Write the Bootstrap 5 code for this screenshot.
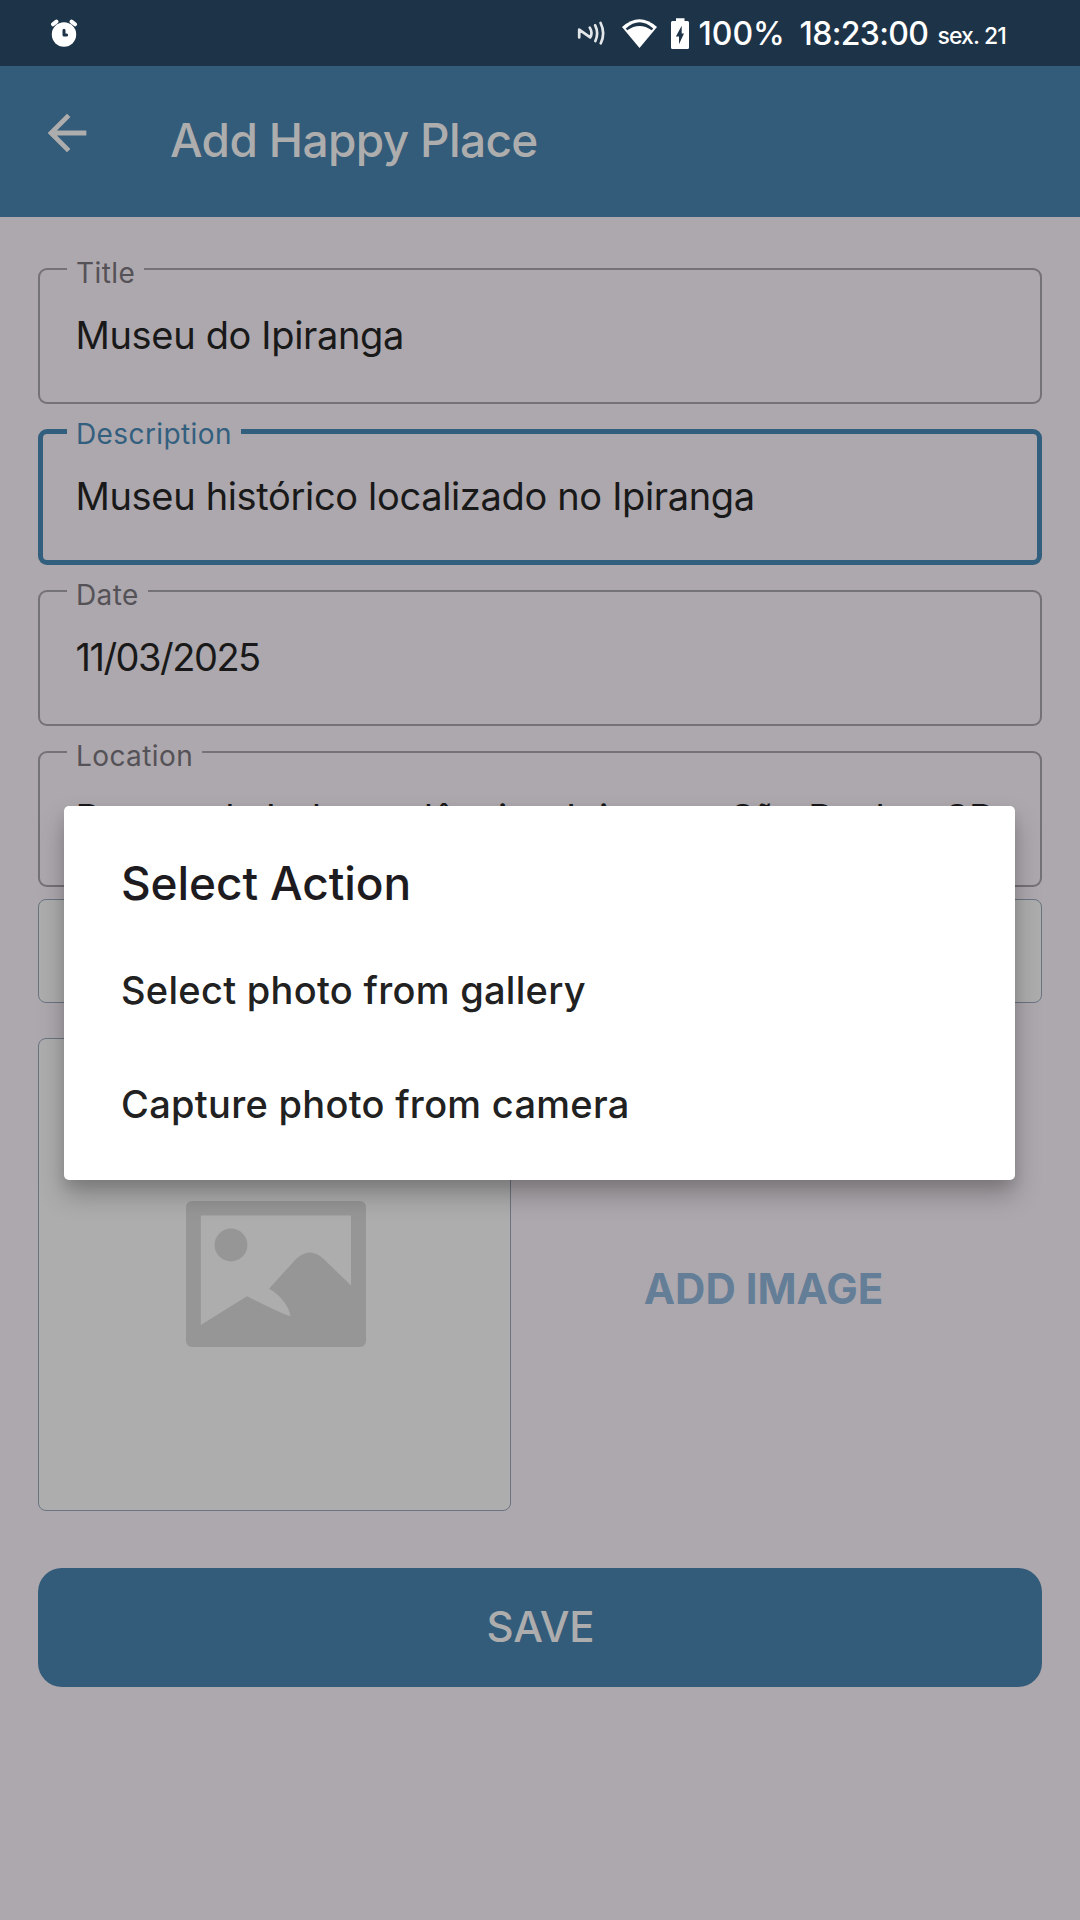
<!DOCTYPE html>
<html lang="pt-BR">
<head>
<meta charset="utf-8">
<meta name="viewport" content="width=device-width, initial-scale=1">
<title>Add Happy Place</title>
<link href="https://cdn.jsdelivr.net/npm/bootstrap@5.3.0/dist/css/bootstrap.min.css" rel="stylesheet">
<style>
  body { font-family: Inter, Roboto, sans-serif; background: #ada8ad; color: #191919; height: 1920px; overflow: hidden; }
  .status-bar { height: 66px; background: #1d3347; padding: 0 74px 0 51px; }
  .status-bar svg { display: block; }
  .st-text { font-size: 32px; line-height: 34px; font-weight: 500; white-space: nowrap; margin-left: -1px; padding-top: 1px; }
  .st-pct { width: 102px; }
  .st-time { width: 138px; letter-spacing: -.64px; }
  .st-day { font-size: 23px; letter-spacing: -.9px; line-height: 34px; font-weight: 500; padding-top: 6px; }
  .ic-wifi { margin-left: 16px; }
  .ic-battery { margin: 0 10px 0 14px; }
  .app-bar { height: 151px; background: #335b7a; color: #adadad; padding: 38px 38px 0; }
  .app-title { font-size: 46px; line-height: 56px; font-weight: 500; letter-spacing: -.64px; margin: 8px 0 0 74px; }
  .form-area { padding: 51px 38px 0; }
  .outlined { height: 136px; margin-bottom: 25px; padding: 0 36px 2px 37.5px; border-radius: 9px; box-shadow: inset 0 0 0 2px #747177; font-size: 38px; letter-spacing: -.34px; white-space: nowrap; }
  .outlined.active { box-shadow: inset 0 0 0 5px #335f7f; }
  .outlined.date-field { letter-spacing: -1.5px; }
  .outlined.place-field { letter-spacing: -.29px; }
  .float-label { top: -9.5px; left: 29px; padding: 0 9px 0 9px; background: #ada8ad; color: #555257; font-size: 28px; line-height: 28px; letter-spacing: .4px; }
  .active .float-label { color: #335f7f; }
  .plain-box { background: #adadad; border: 1px solid #697583; border-radius: 8px; }
  .map-box { height: 104px; margin-top: -13px; }
  .photo-row { margin-top: 35px; }
  .photo-box { width: 473px; height: 473px; }
  .photo-box svg { margin-left: 3px; margin-top: -1px; }
  .add-link { font-size: 42px; font-weight: 700; line-height: 50px; color: #647e98; padding: 29px 26px 0 0; }
  .btn-save { height: 119px; margin-top: 57px; padding: 0 0 2px 1px; border-radius: 24px; background: #335b7a; color: #adadad; font-size: 42px; font-weight: 500; letter-spacing: -.26px; }
  .dialog-card { left: 64px; top: 806px; width: 951px; height: 374px; border-radius: 5px; background: #fff; padding: 48.5px 57px 0; box-shadow: 0 15px 26px rgba(0,0,0,.25), 0 6px 12px rgba(0,0,0,.08); }
  .dialog-title { font-size: 46px; line-height: 56px; font-weight: 500; letter-spacing: -.1px; color: #1d1b20; }
  .dialog-item { font-size: 38px; line-height: 113.5px; font-weight: 500; letter-spacing: .29px; color: #212121; }
  .dialog-title + .dialog-item { margin-top: 23.5px; }
</style>
</head>
<body>
<div class="status-bar d-flex align-items-center text-white">
  <svg width="27" height="28" viewBox="51 19 27 28">
    <circle cx="64" cy="34.5" r="12.2" fill="#fff"/>
    <path d="M53 24.3L56.4 21.6M75 24.3L71.6 21.6" stroke="#fff" stroke-width="4" stroke-linecap="round"/>
    <path d="M64 30.2V34.9H66.6" fill="none" stroke="#1d3347" stroke-width="3" stroke-linecap="round" stroke-linejoin="round"/>
  </svg>
  <svg class="ms-auto" width="30" height="26" viewBox="576 20 30 26" fill="none" stroke="#e3e7ea" stroke-width="2.7" stroke-linecap="round" stroke-linejoin="round">
    <path d="M579.2 37.500V29.600L590.200 37.400Q593 33 589.800 27.600M595.200 25.300Q599 33 595.400 41M600.600 23Q605.600 33 600.800 43.300"/>
  </svg>
  <svg class="ic-wifi" width="35" height="29" viewBox="622 18 35 29">
    <path d="M622 26Q639.5 10.4 657 26L639.5 47Z" fill="#fff"/>
    <path d="M625.8 27.4Q639.5 15 653.2 27.4L651.8 29.2Q639.5 20.6 627.2 29.2Z" fill="#1d3347"/>
  </svg>
  <svg class="ic-battery" width="18" height="31" viewBox="671 17 18 31">
    <path d="M676 17.2h8.500V20h3q1.500 0 1.500 1.500V46.500q0 1.500-1.500 1.500h-15q-1.500 0-1.500-1.500V21.500q0-1.500 1.500-1.500h3.500z" fill="#fff"/>
    <path d="M681.7 24.8L675.9 35.4H679V43.2L684 32.6H681.7Z" fill="#1d3347"/>
  </svg>
  <span class="st-text st-pct">100%</span>
  <span class="st-text st-time">18:23:00</span>
  <span class="st-day">sex. 21</span>
</div>

<nav class="app-bar d-flex align-items-start">
  <svg width="58" height="58" viewBox="0 0 24 24" fill="currentColor"><path d="M20 11H7.830l5.590-5.590L12 4l-8 8 8 8 1.410-1.410L7.830 13H20z"/></svg>
  <h1 class="app-title">Add Happy Place</h1>
</nav>

<main class="form-area">
  <div class="outlined d-flex align-items-center position-relative"><span class="float-label position-absolute">Title</span>Museu do Ipiranga</div>
  <div class="outlined active d-flex align-items-center position-relative"><span class="float-label position-absolute">Description</span>Museu histórico localizado no Ipiranga</div>
  <div class="outlined date-field d-flex align-items-center position-relative"><span class="float-label position-absolute">Date</span>11/03/2025</div>
  <div class="outlined place-field d-flex align-items-center position-relative"><span class="float-label position-absolute">Location</span>Parque da Independência - Ipiranga, São Paulo - SP</div>
  <div class="map-box plain-box"></div>
  <div class="photo-row d-flex">
    <div class="photo-box plain-box d-flex align-items-center justify-content-center">
      <svg width="180" height="146" viewBox="0 0 180 146">
        <rect width="180" height="146" rx="6" fill="#969696"/>
        <path d="M14.800 14.600H165V84.500L137.700 58Q124 45 110 58L83 87.700C95 94 103 106 104.500 115Q100 115 61 95.300L14.800 124Z" fill="#adadad"/>
        <circle cx="45" cy="44" r="16.400" fill="#969696"/>
      </svg>
    </div>
    <div class="add-link flex-fill d-flex align-items-center justify-content-center">ADD IMAGE</div>
  </div>
  <button class="btn btn-save w-100 border-0">SAVE</button>
</main>

<div class="dialog-card position-absolute">
  <div class="dialog-title">Select Action</div>
  <div class="dialog-item">Select photo from gallery</div>
  <div class="dialog-item">Capture photo from camera</div>
</div>
<script src="https://cdn.jsdelivr.net/npm/bootstrap@5.3.0/dist/js/bootstrap.bundle.min.js"></script>
</body>
</html>
